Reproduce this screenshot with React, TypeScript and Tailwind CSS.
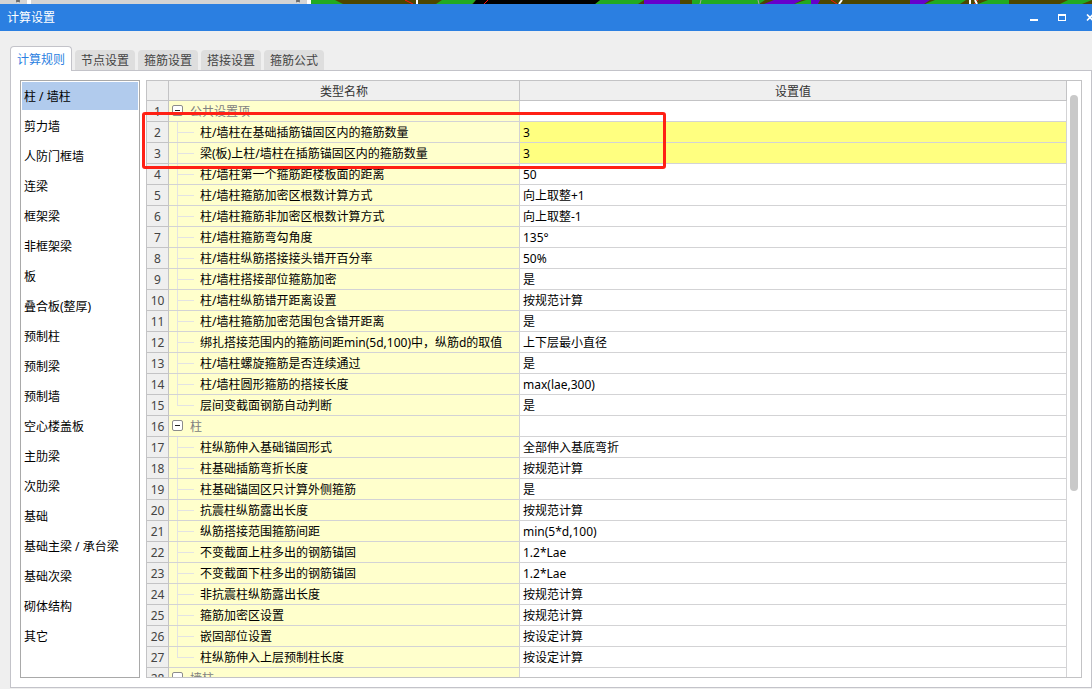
import React, { useState } from 'react';
import clsx from 'clsx';

interface SettingRow {
  name: string;
  value?: string;
  group?: boolean;
  last?: boolean;
  highlight?: boolean;
}

const tabs = ['计算规则', '节点设置', '箍筋设置', '搭接设置', '箍筋公式'];

const categories = [
  '柱 / 墙柱',
  '剪力墙',
  '人防门框墙',
  '连梁',
  '框架梁',
  '非框架梁',
  '板',
  '叠合板(整厚)',
  '预制柱',
  '预制梁',
  '预制墙',
  '空心楼盖板',
  '主肋梁',
  '次肋梁',
  '基础',
  '基础主梁 / 承台梁',
  '基础次梁',
  '砌体结构',
  '其它',
];

const rows: SettingRow[] = [
  { name: '公共设置项', group: true },
  { name: '柱/墙柱在基础插筋锚固区内的箍筋数量', value: '3', highlight: true },
  { name: '梁(板)上柱/墙柱在插筋锚固区内的箍筋数量', value: '3', highlight: true },
  { name: '柱/墙柱第一个箍筋距楼板面的距离', value: '50' },
  { name: '柱/墙柱箍筋加密区根数计算方式', value: '向上取整+1' },
  { name: '柱/墙柱箍筋非加密区根数计算方式', value: '向上取整-1' },
  { name: '柱/墙柱箍筋弯勾角度', value: '135°' },
  { name: '柱/墙柱纵筋搭接接头错开百分率', value: '50%' },
  { name: '柱/墙柱搭接部位箍筋加密', value: '是' },
  { name: '柱/墙柱纵筋错开距离设置', value: '按规范计算' },
  { name: '柱/墙柱箍筋加密范围包含错开距离', value: '是' },
  { name: '绑扎搭接范围内的箍筋间距min(5d,100)中，纵筋d的取值', value: '上下层最小直径' },
  { name: '柱/墙柱螺旋箍筋是否连续通过', value: '是' },
  { name: '柱/墙柱圆形箍筋的搭接长度', value: 'max(lae,300)' },
  { name: '层间变截面钢筋自动判断', value: '是', last: true },
  { name: '柱', group: true },
  { name: '柱纵筋伸入基础锚固形式', value: '全部伸入基底弯折' },
  { name: '柱基础插筋弯折长度', value: '按规范计算' },
  { name: '柱基础锚固区只计算外侧箍筋', value: '是' },
  { name: '抗震柱纵筋露出长度', value: '按规范计算' },
  { name: '纵筋搭接范围箍筋间距', value: 'min(5*d,100)' },
  { name: '不变截面上柱多出的钢筋锚固', value: '1.2*Lae' },
  { name: '不变截面下柱多出的钢筋锚固', value: '1.2*Lae' },
  { name: '非抗震柱纵筋露出长度', value: '按规范计算' },
  { name: '箍筋加密区设置', value: '按规范计算' },
  { name: '嵌固部位设置', value: '按设定计算' },
  { name: '柱纵筋伸入上层预制柱长度', value: '按设定计算', last: true },
  { name: '墙柱', group: true },
];

// Sliver of the drawing window that shows above the dialog
const CanvasStrip: React.FC = () => (
  <div className="flex h-1 shrink-0 overflow-hidden bg-[#d4d4d4]">
    <svg className="h-1 w-[1092px] shrink-0" viewBox="0 0 1092 4" aria-hidden="true">
      <path d="M27 0h4v4h-4zM307 0h4v4h-4z" fill="#fff" />
      <path d="M16 0l4 2M20 0l-4 2M296 0l4 2M300 0l-4 2" stroke="#555" />
      <path d="M311 0h781v4H311z" fill="#4d4600" />
      <path d="M311 0h24l8 4h-32zM442 0h34l-4 4h-36zM600 0h44l-6 4h-43zM692 0h73l-6 4h-67zM806 0h14l-8 4h-18zM935 0h67v4h-77zM960 0h49v4h-10z" fill="#22aa22" />
      <path d="M955 0h33l-10 4h-33zM1009 0h70v4h-70z" fill="#4d4600" />
      <path d="M940 0h26l-6 4h-30zM1068 0h24l-10 4h-22z" fill="#22aa22" />
      <path d="M476 0h124l-5 4H473z" fill="#000" />
      <path d="M644 0h36v4h-36zM774 0h28l-8 4h-30zM811 0h9l-2 4h-7zM910 0h20l-6 4h-14z" fill="#6600cc" />
      <path d="M405 0l8 4M488 0l-4 4M831 0l6 4M978 0l-4 4" stroke="#ff1010" />
      <path d="M417 0v4M842 0l-3 4M970 0v4M975 0l2 4" stroke="#fff" strokeWidth="2" />
      <path d="M701 0l-1 4M758 0l1 4" stroke="#aaa" />
    </svg>
    <div className="grow bg-[#4d4600]" />
  </div>
);

const TitleBar: React.FC = () => (
  <header className="flex h-[27px] shrink-0 items-center justify-between overflow-hidden bg-[#2b7fe1] pl-[7px] text-white">
    <h1 className="text-xs">计算设置</h1>
    <div className="-mr-[5px] flex gap-[14px]">
      <button type="button" aria-label="最小化" className="flex h-[27px] w-[14px] items-center justify-center">
        <svg width="8" height="8" viewBox="0 0 8 8" shapeRendering="crispEdges">
          <path d="M0 5h8v2H0z" fill="currentColor" />
        </svg>
      </button>
      <button type="button" aria-label="最大化" className="flex h-[27px] w-[14px] items-center justify-center">
        <svg width="8" height="8" viewBox="0 0 8 8" shapeRendering="crispEdges">
          <path d="M0 0h8v7H0zM1 2v4h6V2z" fill="currentColor" fillRule="evenodd" />
        </svg>
      </button>
      <button type="button" aria-label="关闭" className="flex h-[27px] w-[14px] items-center justify-center">
        <svg width="8" height="8" viewBox="0 0 8 8">
          <path d="M1 0.5l6 6M7 0.5l-6 6" stroke="currentColor" strokeWidth="1.6" />
        </svg>
      </button>
    </div>
  </header>
);

const TreeBranch: React.FC<{ last?: boolean }> = ({ last }) => (
  <svg className="ml-2 shrink-0" width="17" height="20" viewBox="0 0 17 20" shapeRendering="crispEdges" aria-hidden="true">
    <path d={last ? 'M0.5 0V10.5H17' : 'M0.5 0V20M0 10.5H17'} fill="none" stroke="#e3e3e3" />
  </svg>
);

const GroupToggle: React.FC<{ name: string }> = ({ name }) => (
  <button type="button" aria-label={name} className="ml-[3px] shrink-0">
    <svg width="11" height="20" viewBox="0 0 11 20">
      <rect x="0.5" y="4.5" width="10" height="10" rx="1.5" fill="#fff" stroke="#8c8c8c" />
      <path d="M3 9.5h5" stroke="#222" />
    </svg>
  </button>
);

const SettingsTable: React.FC = () => (
  <table className="w-full table-fixed border-separate border-spacing-0 text-xs leading-[18px]">
    <colgroup>
      <col className="w-[22px]" />
      <col className="w-[351px]" />
      <col />
    </colgroup>
    <thead>
      <tr className="bg-[#efefef] leading-[17px] text-[#333]">
        <th className="h-5 border-r border-b border-[#c3c3c5] p-0" />
        <th className="h-5 border-r border-b border-[#c3c3c5] p-0 pt-[2px] font-normal">类型名称</th>
        <th className="h-5 border-r border-b border-[#c3c3c5] p-0 pt-[2px] font-normal">设置值</th>
      </tr>
    </thead>
    <tbody>
      {rows.map((row, index) => (
        <tr key={index}>
          <td className="h-[21px] border-r border-b border-[#c3c3c5] bg-[#efefef] p-0 pt-[2px] text-center text-[#444]">
            {index + 1}
          </td>
          <td className="h-[21px] border-r border-b border-[#d3d3d5] bg-[#ffffcc] p-0">
            <div className="flex h-5 items-center whitespace-nowrap">
              {row.group ? <GroupToggle name={row.name} /> : <TreeBranch last={row.last} />}
              <span className={clsx('pt-[2px]', row.group ? 'ml-[7px] text-[#808080]' : 'ml-[6px] text-black')}>
                {row.name}
              </span>
            </div>
          </td>
          <td
            className={clsx(
              'h-[21px] border-r border-b border-[#d3d3d5] p-0 pt-[2px] pl-[3px] text-black',
              row.highlight ? 'bg-[#ffff80]' : 'bg-white'
            )}
          >
            {row.value}
          </td>
        </tr>
      ))}
    </tbody>
  </table>
);

const App: React.FC = () => {
  const [activeTab, setActiveTab] = useState(0);
  const [category, setCategory] = useState(0);

  return (
    <div className="flex h-screen flex-col overflow-hidden bg-[#efefef] font-['Noto_Sans','Noto_Sans_CJK_SC',sans-serif]">
      <CanvasStrip />
      <TitleBar />
      <main className="flex min-h-0 grow flex-col pt-[15px] pb-px pl-[10px]">
        <div role="tablist" className="z-10 -mb-px flex shrink-0 items-end gap-[3px] text-xs">
          {tabs.map((tab, index) => (
            <button
              key={tab}
              type="button"
              role="tab"
              aria-selected={index === activeTab}
              onClick={() => setActiveTab(index)}
              className={clsx(
                'rounded-t-sm px-[6px] pt-[2px]',
                index === activeTab
                  ? 'h-[25px] border border-b-0 border-[#c3c3c9] bg-white text-[#2b7fe1]'
                  : 'mb-px h-5 bg-[#dedede] text-[#444]'
              )}
            >
              {tab}
            </button>
          ))}
        </div>
        <div className="flex min-h-0 grow gap-[6px] border border-[#c3c3c9] bg-white p-[9px]">
          <ul className="w-[120px] shrink-0 overflow-hidden border border-[#a9a9a9] text-xs">
            {categories.map((item, index) => (
              <li key={item} className="p-px">
                <button
                  type="button"
                  onClick={() => setCategory(index)}
                  className={clsx(
                    'block h-7 w-full pt-[2px] pl-[2px] text-left whitespace-nowrap text-black',
                    index === category && 'bg-[#b1cbed]'
                  )}
                >
                  {item}
                </button>
              </li>
            ))}
          </ul>
          <section className="relative flex min-w-0 grow border border-[#c3c3c5]">
            <div className="min-w-0 grow overflow-hidden">
              <SettingsTable />
            </div>
            <div className="w-[14px] shrink-0 pt-[14px] pl-[3px]">
              <div className="h-[68%] w-2 rounded-full bg-[#c9c9c9]" />
            </div>
            <div className="pointer-events-none absolute top-[31px] -left-[5px] h-[57px] w-[524px] rounded-[3px] border-3 border-[#ff2015]" />
          </section>
        </div>
      </main>
    </div>
  );
};

export default App;
